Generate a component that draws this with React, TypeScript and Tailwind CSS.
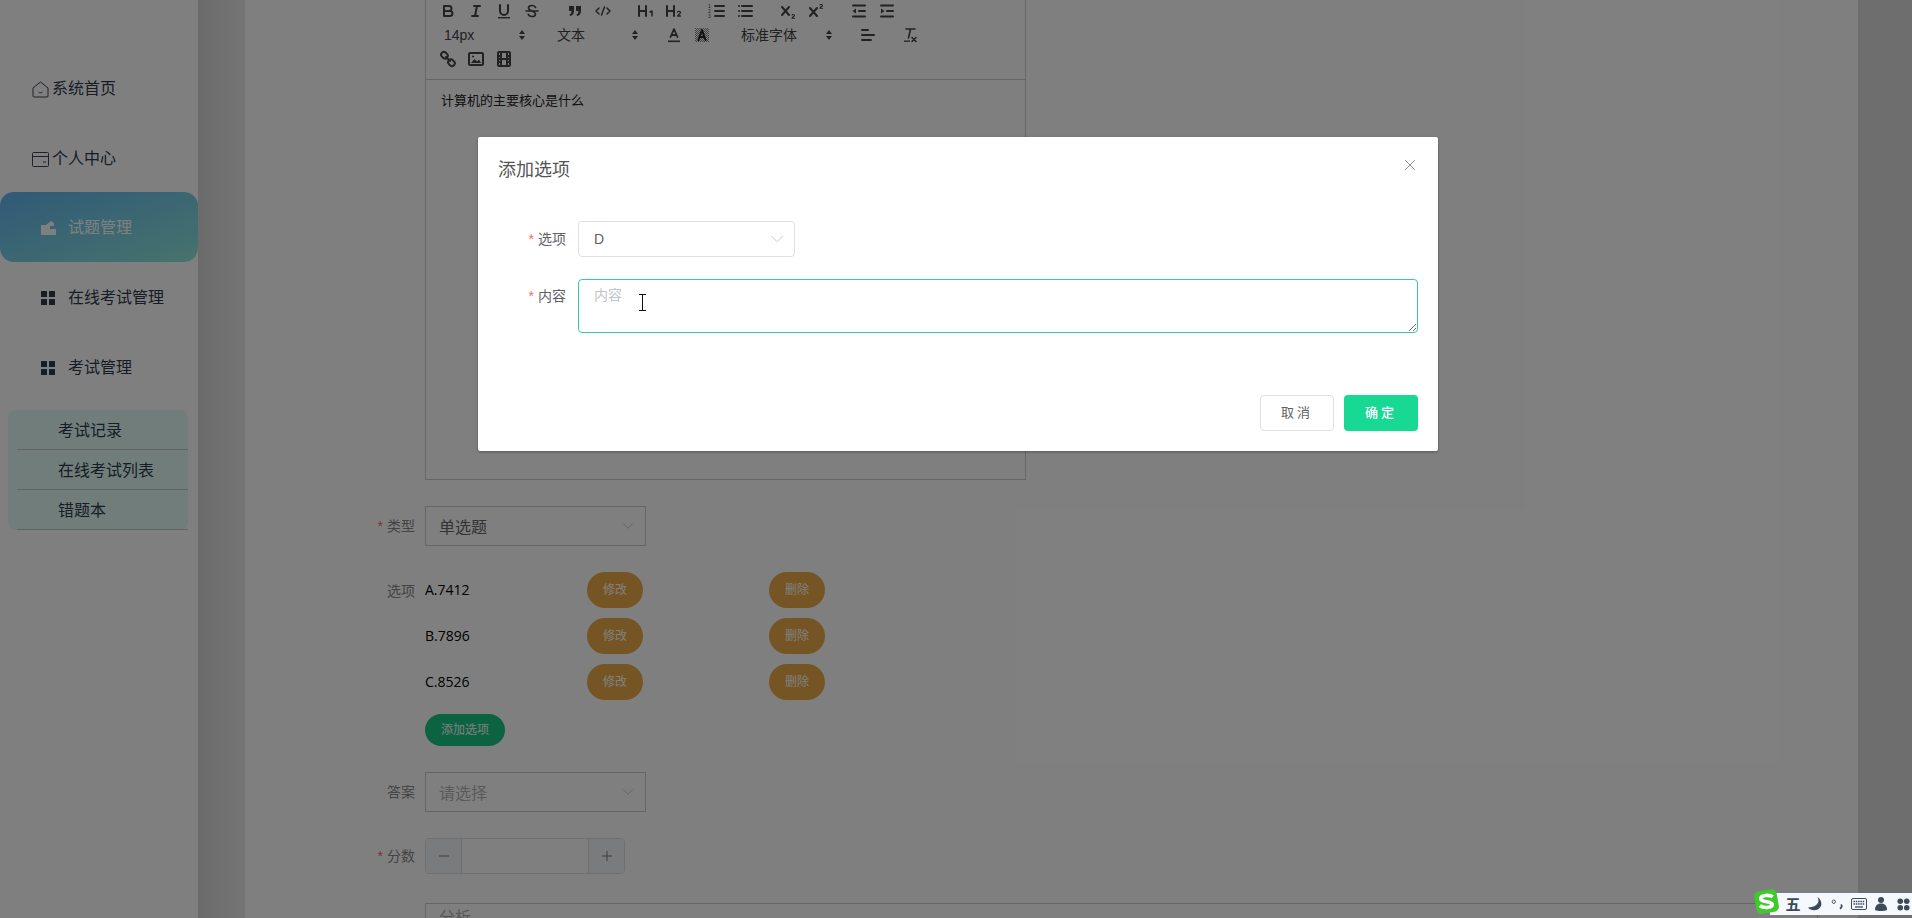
import React from 'react';
import { ChevronDown, X, Minus, Plus } from 'lucide-react';

function Grid() {
  return (
    <svg viewBox="0 0 14 14" className="w-[14px] h-[14px]" fill="#2f3a4d">
      <rect x="0" y="0" width="6" height="6" rx="0.5" />
      <rect x="8" y="0" width="6" height="6" rx="0.5" />
      <rect x="0" y="8" width="6" height="6" rx="0.5" />
      <rect x="8" y="8" width="6" height="6" rx="0.5" />
    </svg>
  );
}

function HomeIcon() {
  return (
    <svg viewBox="0 0 17 17" className="w-[17px] h-[17px]" fill="none" stroke="#3e4452" strokeWidth="1">
      <path d="M1 7 8.500 1 16 7v8a1 1 0 0 1-1 1H2a1 1 0 0 1-1-1z" />
      <path d="M6.500 11c.8 1 3.200 1 4 0" />
    </svg>
  );
}

function WalletIcon() {
  return (
    <svg viewBox="0 0 17 15" className="w-[17px] h-[15px]" fill="none" stroke="#3e4452" strokeWidth="1">
      <rect x="0.500" y="0.500" width="16" height="14" rx="1" />
      <path d="M0.500 4.500h16M11 10h3" />
    </svg>
  );
}

function ActiveIcon() {
  return (
    <svg viewBox="0 0 15 14" className="w-[15px] h-[14px]" fill="#ffffff">
      <path d="M0 4h5l5-4 3 2v3H9v3h6v6H0z" />
    </svg>
  );
}

function MenuItem({ label, icon, pl, gap }: { label: string; icon: React.ReactNode; pl: string; gap: string }) {
  return (
    <div className={`h-[70px] pt-[2px] flex items-center text-[16px] text-[#2f3a4d] ${pl} ${gap}`}>
      {icon}
      <span>{label}</span>
    </div>
  );
}

// quill toolbar icons, 18x18 box like the real editor
const S = { fill: 'none', stroke: '#444', strokeWidth: 2 };

function Q({ children }: { children: React.ReactNode }) {
  return (
    <svg viewBox="0 0 18 18" className="w-[18px] h-[18px]" strokeLinecap="round" strokeLinejoin="round">
      {children}
    </svg>
  );
}

const BoldI = () => <Q><path {...S} d="M5 4h5a2.500 2.500 0 0 1 0 5H5zM5 9h6a2.500 2.500 0 0 1 0 5H5z" /></Q>;
const ItalicI = () => <Q><path {...S} d="M7 4h6M5 14h6M10 4 8 14" /></Q>;
const UnderI = () => <Q><path {...S} d="M5 3v6a4 4 0 0 0 8 0V3" /><rect x="3" y="15" width="12" height="1.400" fill="#444" /></Q>;
const StrikeI = () => <Q><path {...S} strokeWidth="1.600" d="M12.500 5.500C12 4 10.500 3.500 9 3.500 7 3.500 5.500 4.500 5.500 6c0 3 7 3 7 6.200 0 1.500-1.500 2.300-3.500 2.300-1.700 0-3.200-.6-3.800-2.200M3 9h12" /></Q>;
const QuoteI = () => <Q><path fill="#444" d="M3 4h5v5c0 3-1.500 4.500-4 5l-.5-1.500C5 12 5.500 11 5.500 9H3zM10 4h5v5c0 3-1.500 4.500-4 5l-.5-1.500C12 12 12.500 11 12.500 9H10z" /></Q>;
const CodeI = () => <Q><path {...S} strokeWidth="1.500" d="M5 6 2 9l3 3M13 6l3 3-3 3M10.500 5 7.500 13" /></Q>;
const H1I = () => <Q><path {...S} d="M2 4v10M9 4v10M2 9h7" /><path {...S} strokeWidth="1.500" d="M13 10l2-1v5" /></Q>;
const H2I = () => <Q><path {...S} d="M2 4v10M9 4v10M2 9h7" /><path {...S} strokeWidth="1.300" d="M12.500 10c.5-1 3-1 3 .5 0 1.200-3 2.500-3 3.500h3" /></Q>;
const OlI = () => <Q><path {...S} d="M7 4h9M7 9h9M7 14h9" /><text x="0" y="6" fontSize="5" fill="#444" fontFamily="Liberation Sans">1</text><text x="0" y="11" fontSize="5" fill="#444" fontFamily="Liberation Sans">2</text><text x="0" y="16" fontSize="5" fill="#444" fontFamily="Liberation Sans">3</text></Q>;
const UlI = () => <Q><path {...S} d="M6 4h10M6 9h10M6 14h10M3 4h.01M3 9h.01M3 14h.01" /></Q>;
const SubI = () => <Q><path {...S} d="M3 5l7 8M10 5l-7 8" /><path {...S} strokeWidth="1.100" d="M13 13c.3-.8 2.500-.8 2.500.4 0 1-2.500 1.800-2.500 2.800h2.500" /></Q>;
const SupI = () => <Q><path {...S} d="M3 6l7 8M10 6l-7 8" /><path {...S} strokeWidth="1.100" d="M13 3c.3-.8 2.500-.8 2.500.4 0 1-2.500 1.800-2.500 2.800h2.500" /></Q>;
const OutdI = () => <Q><path {...S} d="M3 3.500h12M9 9h6M3 14.500h12" /><path fill="#444" d="M6 6.500v5L2.500 9z" /></Q>;
const IndI = () => <Q><path {...S} d="M3 3.500h12M9 9h6M3 14.500h12" /><path fill="#444" d="M3 6.500v5L6.500 9z" /></Q>;
const ColorI = () => <Q><path {...S} strokeWidth="1.800" d="M5.500 11 9 3l3.500 8M6.500 9h5" /><rect x="3" y="14.500" width="12" height="1.600" fill="#444" /></Q>;
const BgI = () => (
  <Q>
    <defs>
      <pattern id="hatch" width="2" height="2" patternUnits="userSpaceOnUse">
        <rect width="1" height="1" fill="#8a8a8a" />
        <rect x="1" y="1" width="1" height="1" fill="#8a8a8a" />
      </pattern>
    </defs>
    <path fill="url(#hatch)" d="M2 2h14v14H2z" />
    <path fill="none" stroke="#222" strokeWidth="2" d="M5.500 14 9 4l3.500 10M6.500 11h5" />
  </Q>
);
const AlignI = () => <Q><path {...S} d="M3 4h6M3 9h12M3 14h9" /></Q>;
const ClearI = () => <Q><path {...S} strokeWidth="1.600" d="M5 3h9M9.500 3 7.500 12" /><rect x="3" y="14.500" width="6" height="1.300" fill="#444" /><path {...S} strokeWidth="1.600" d="M11 11.500l4 4M15 11.500l-4 4" /></Q>;
const LinkI = () => <Q><path {...S} d="M7 7l4 4" /><rect {...S} x="2" y="2.500" width="7" height="5.500" rx="2.700" transform="rotate(45 5.500 5.200)" /><rect {...S} x="9" y="10" width="7" height="5.500" rx="2.700" transform="rotate(45 12.500 12.700)" /></Q>;
const ImageI = () => <Q><rect {...S} x="2" y="3" width="14" height="12" rx="1" /><path fill="#444" d="M4 13l3.500-4 2.500 2.500 2-2 2 3.500z" /><circle cx="6" cy="6.500" r="1" fill="#444" /></Q>;
const VideoI = () => <Q><rect {...S} x="3" y="2" width="12" height="14" rx="1" /><path {...S} d="M6 2v14M12 2v14M3 6h3M3 9h12M3 12h3M12 6h3M12 12h3" /></Q>;

function Cell({ children }: { children: React.ReactNode }) {
  return <span className="w-[28px] h-[24px] flex items-center justify-center shrink-0">{children}</span>;
}

function PickerCell({ label, w }: { label: string; w: string }) {
  return (
    <span className={`${w} h-[24px] flex items-center justify-between pl-[10px] pr-[2px] text-[14px] text-[#444] shrink-0`}>
      <span>{label}</span>
      <svg viewBox="0 0 8 12" className="w-[8px] h-[12px]" fill="#444">
        <path d="M4 1l3 4H1zM4 11 1 7h6z" />
      </svg>
    </span>
  );
}

function Editor() {
  return (
    <div className="w-[601px] h-[492px] border border-[#ccc] flex flex-col -mt-[12px]">
      <div className="h-[91px] border-b border-[#ccc] pl-[8px] pt-[10px] shrink-0">
        <div className="flex items-center h-[24px]">
          <Cell><BoldI /></Cell>
          <Cell><ItalicI /></Cell>
          <Cell><UnderI /></Cell>
          <Cell><StrikeI /></Cell>
          <span className="w-[15px]" />
          <Cell><QuoteI /></Cell>
          <Cell><CodeI /></Cell>
          <span className="w-[15px]" />
          <Cell><H1I /></Cell>
          <Cell><H2I /></Cell>
          <span className="w-[15px]" />
          <Cell><OlI /></Cell>
          <Cell><UlI /></Cell>
          <span className="w-[15px]" />
          <Cell><SubI /></Cell>
          <Cell><SupI /></Cell>
          <span className="w-[15px]" />
          <Cell><OutdI /></Cell>
          <Cell><IndI /></Cell>
        </div>
        <div className="flex items-center h-[24px]">
          <PickerCell label="14px" w="w-[94px]" />
          <span className="w-[19px]" />
          <PickerCell label="文本" w="w-[94px]" />
          <span className="w-[19px]" />
          <Cell><ColorI /></Cell>
          <Cell><BgI /></Cell>
          <span className="w-[15px]" />
          <PickerCell label="标准字体" w="w-[104px]" />
          <span className="w-[19px]" />
          <Cell><AlignI /></Cell>
          <span className="w-[14px]" />
          <Cell><ClearI /></Cell>
        </div>
        <div className="flex items-center h-[24px]">
          <Cell><LinkI /></Cell>
          <Cell><ImageI /></Cell>
          <Cell><VideoI /></Cell>
        </div>
      </div>
      <p className="px-[15px] pt-[11px] text-[13px] leading-[20px] text-[#222]">计算机的主要核心是什么</p>
    </div>
  );
}

function FakeSelect({ value, placeholder }: { value: string; placeholder?: boolean }) {
  return (
    <div className="w-[221px] h-[40px] border border-[#ccc] flex items-center justify-between px-[13px] bg-white">
      <span className={`text-[16px] pt-[3px] ${placeholder ? 'text-[#b4b4b4]' : 'text-[#666]'}`}>{value}</span>
      <ChevronDown className="w-[18px] h-[18px] text-[#c4c4c4] mr-[-5px]" strokeWidth={1.25} />
    </div>
  );
}

function Label({ text, required }: { text: string; required?: boolean }) {
  return (
    <span className="w-[68px] shrink-0 text-right pr-[10px] text-[14px] text-[#888]">
      {required && <span className="text-[#f56c6c] mr-[4px]">*</span>}
      {text}
    </span>
  );
}

function OptionRow({ label, text }: { label?: string; text: string }) {
  return (
    <div className="flex items-center h-[36px] mb-[10px]">
      {label ? <span className="flex pt-[2px]"><Label text={label} /></span> : <span className="w-[68px] shrink-0" />}
      <span className="w-[162px] shrink-0 pb-[2px] text-[14px] text-black font-['Open_Sans',sans-serif]">{text}</span>
      <button className="w-[56px] h-[36px] rounded-[18px] bg-[#ebab47] text-white text-[12px]">修改</button>
      <span className="w-[126px]" />
      <button className="w-[56px] h-[36px] rounded-[18px] bg-[#ebab47] text-white text-[12px]">删除</button>
    </div>
  );
}

function MainForm() {
  return (
    <div className="pl-[112px] flex flex-col h-full">
      <div className="pl-[68px]">
        <Editor />
      </div>
      <div className="flex items-center mt-[26px]">
        <Label text="类型" required />
        <FakeSelect value="单选题" />
      </div>
      <div className="mt-[26px] flex flex-col">
        <OptionRow label="选项" text="A.7412" />
        <OptionRow text="B.7896" />
        <OptionRow text="C.8526" />
        <div className="pl-[68px] mt-[4px]">
          <button className="w-[80px] h-[32px] rounded-[16px] bg-[#16c784] text-white text-[12px]">添加选项</button>
        </div>
      </div>
      <div className="flex items-center mt-[26px]">
        <Label text="答案" />
        <FakeSelect value="请选择" placeholder />
      </div>
      <div className="flex items-center mt-[26px]">
        <Label text="分数" required />
        <div className="w-[200px] h-[36px] border border-[#dcdfe6] rounded-[4px] flex items-stretch overflow-hidden">
          <span className="w-[36px] bg-[#f5f7fa] border-r border-[#dcdfe6] flex items-center justify-center">
            <Minus className="w-[16px] h-[16px] text-[#606266]" strokeWidth={1.25} />
          </span>
          <span className="flex-1" />
          <span className="w-[36px] bg-[#f5f7fa] border-l border-[#dcdfe6] flex items-center justify-center">
            <Plus className="w-[16px] h-[16px] text-[#606266]" strokeWidth={1.25} />
          </span>
        </div>
      </div>
      <div className="flex mt-[29px]">
        <span className="w-[68px] shrink-0" />
        <div className="flex-1 mr-[40px] h-[60px] border border-[#ccc] px-[13px] pt-[2px] text-[16px] text-[#b4b4b4]">分析</div>
      </div>
    </div>
  );
}

function Modal() {
  return (
    <div className="w-[960px] h-[314px] mt-[137px] ml-[478px] bg-white rounded-[2px] shadow-[0_1px_3px_rgba(0,0,0,0.3)] flex flex-col px-[20px]">
      <div className="flex justify-between pt-[21px] h-[70px] shrink-0">
        <span className="text-[18px] leading-[24px] text-[#555]">添加选项</span>
        <X className="w-[18px] h-[18px] text-[#909399] mt-[-2px] mr-[-1px]" strokeWidth={1.3} />
      </div>
      <div className="flex items-center mt-[14px] h-[36px]">
        <span className="w-[80px] shrink-0 text-right pr-[12px] text-[14px] text-[#606266]">
          <span className="text-[#f56c6c] mr-[4px]">*</span>选项
        </span>
        <div className="w-[217px] h-[36px] border border-[#dcdfe6] rounded-[4px] flex items-center justify-between px-[15px]">
          <span className="text-[14px] text-[#606266]">D</span>
          <ChevronDown className="w-[22px] h-[22px] text-[#c0c4cc] mr-[-9px]" strokeWidth={1} />
        </div>
      </div>
      <div className="flex mt-[22px]">
        <span className="w-[80px] shrink-0 text-right pr-[12px] pt-[7px] text-[14px] leading-[20px] text-[#606266]">
          <span className="text-[#f56c6c] mr-[4px]">*</span>内容
        </span>
        <div className="relative flex-1 h-[54px]">
          <textarea
            className="w-full h-full border border-[#3bc9a5] rounded-[4px] px-[15px] py-[5px] text-[14px] leading-[20px] outline-none placeholder:text-[#c0c4cc] resize-y"
            placeholder="内容"
          />
          {/* text cursor caught in the shot */}
          <svg viewBox="0 0 9 17" className="absolute left-[60px] top-[15px] w-[9px] h-[17px]" fill="none" stroke="#111" strokeWidth="1">
            <path d="M1 .5h7M4.500.5v16M1 16.500h7" />
          </svg>
        </div>
      </div>
      <div className="flex justify-end gap-[10px] mt-[62px]">
        <button className="w-[74px] h-[36px] border border-[#dcdfe6] rounded-[4px] bg-white text-[#606266] text-[13px] tracking-[3px]">取消</button>
        <button className="w-[74px] h-[36px] rounded-[4px] bg-[#17d993] text-white text-[13px] tracking-[3px] font-medium">确定</button>
      </div>
    </div>
  );
}

function ImeCell({ children }: { children: React.ReactNode }) {
  return <span className="w-[22px] h-full flex items-center justify-center shrink-0">{children}</span>;
}

function ImeBar() {
  return (
    <div className="absolute right-0 bottom-[3px] h-[22px] w-[142px] bg-[#f5f8fc] flex items-center pl-[12px] text-[#3c4a5c]">
      <svg viewBox="0 0 26 26" className="absolute -left-[17px] -top-[5px] w-[27px] h-[27px]">
        <rect x="2" y="2" width="22" height="22" rx="5" fill="#3fc92a" transform="rotate(-10 13 13)" />
        <path d="M19 8.500C16 6 7 7 7.500 10.500c.5 3.500 11 2 11 5.500 0 3.500-9 3.500-12 1" fill="none" stroke="#fff" strokeWidth="3.500" />
      </svg>
      <ImeCell><span className="text-[15px] font-bold leading-none">五</span></ImeCell>
      <ImeCell>
        <svg viewBox="0 0 16 16" className="w-[14px] h-[14px]" fill="#3c4a5c"><path d="M11 0c3 6-1 12-11 12 3 4 12 5 15-2 1-4-1-8-4-10z" /></svg>
      </ImeCell>
      <ImeCell>
        <svg viewBox="0 0 14 14" className="w-[13px] h-[13px]" fill="none" stroke="#3c4a5c">
          <circle cx="3" cy="4" r="1.800" />
          <path d="M10.500 7.500c1.500 0 1.500 3-1 4" strokeWidth="2" />
        </svg>
      </ImeCell>
      <ImeCell>
        <svg viewBox="0 0 16 12" className="w-[16px] h-[12px]" fill="none" stroke="#3c4a5c">
          <rect x="0.500" y="0.500" width="15" height="11" rx="1.500" />
          <path d="M2.500 3.500h11M2.500 6h11" strokeWidth="1.500" strokeDasharray="1.500 .8" />
          <path d="M4 9h8" strokeWidth="1.300" />
        </svg>
      </ImeCell>
      <ImeCell>
        <svg viewBox="0 0 14 14" className="w-[14px] h-[14px]" fill="#3c4a5c"><circle cx="7" cy="3" r="3" /><path d="M1 13c0-4 2-6.500 6-6.500s6 2.500 6 6.500c-3 1.300-9 1.300-12 0z" /></svg>
      </ImeCell>
      <ImeCell>
        <svg viewBox="0 0 14 14" className="w-[13px] h-[13px]" fill="#3c4a5c"><circle cx="3.500" cy="3.500" r="3" /><circle cx="10.500" cy="3.500" r="3" /><circle cx="3.500" cy="10.500" r="3" /><circle cx="10.500" cy="10.500" r="3" /></svg>
      </ImeCell>
    </div>
  );
}

export default function App() {
  return (
    <div className="relative w-[1912px] h-[918px] overflow-hidden flex bg-white font-['Microsoft_YaHei','Liberation_Sans','Noto_Sans_CJK_SC',sans-serif]">
      {/* sidebar */}
      <aside className="w-[198px] shrink-0 bg-white pt-[53px]">
        <MenuItem label="系统首页" icon={<HomeIcon />} pl="pl-[32px]" gap="gap-[3px]" />
        <MenuItem label="个人中心" icon={<WalletIcon />} pl="pl-[32px]" gap="gap-[3px]" />
        <div className="h-[70px] -mt-[1px] pt-[2px] flex items-center gap-[12px] pl-[41px] rounded-[14px] bg-gradient-to-br from-[#60b4ee] to-[#90e6da] text-[16px] text-white">
          <ActiveIcon />
          <span>试题管理</span>
        </div>
        <MenuItem label="在线考试管理" icon={<Grid />} pl="pl-[41px]" gap="gap-[13px]" />
        <MenuItem label="考试管理" icon={<Grid />} pl="pl-[41px]" gap="gap-[13px]" />
        <div className="ml-[8px] mr-[10px] mt-[8px] bg-[#e0faf5] rounded-[8px] flex flex-col">
          {['考试记录', '在线考试列表', '错题本'].map((item) => (
            <div key={item} className="h-[40px] pt-[2px] ml-[9px] border-b border-[#c5c9c9] pl-[41px] flex items-center text-[16px] text-[#2f3a4d]">
              {item}
            </div>
          ))}
        </div>
      </aside>
      {/* gutter left of the form card */}
      <div className="w-[47px] shrink-0 bg-gradient-to-r from-[#d6d6d6] to-[#ebebeb]" />
      <main className="flex-1 bg-white">
        <MainForm />
      </main>
      <div className="w-[54px] shrink-0 bg-[#dcdcdc]" />

      {/* dialog */}
      <div className="absolute inset-0 bg-black/50">
        <Modal />
      </div>
      <ImeBar />
    </div>
  );
}
